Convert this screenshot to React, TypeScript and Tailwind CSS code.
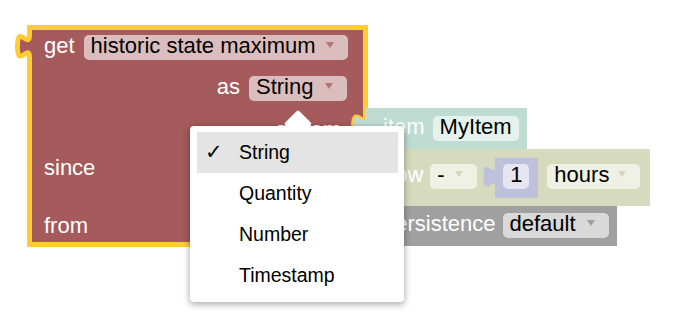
import React from 'react';

type DropdownProps = {
  label: string;
  className: string;
  arrowClass: string;
};

// Blockly dropdown field: text on a pale pill, small triangle at the right
const Dropdown: React.FC<DropdownProps> = ({ label, className, arrowClass }) => (
  <div className={`h-[25px] rounded-[5px] flex items-start pl-[7px] pr-[14px] leading-[21px] text-black ${className}`}>
    <span>{label}</span>
    <span className={`ml-auto mt-[7px] w-0 h-0 border-x-[4px] border-x-transparent border-t-[6px] ${arrowClass}`} />
  </div>
);

const menuItems = ['String', 'Quantity', 'Number', 'Timestamp'];

export default function App() {
  return (
    <div className="relative w-[673px] h-[324px] bg-white overflow-hidden font-['Liberation_Sans',Arial,sans-serif] text-[22px]">
      {/* selected block */}
      <div className="absolute left-[27px] top-[25px] w-[341px] h-[222px] border-[5px] border-[#ffcc33] bg-[#a55b5b] text-white flex flex-col">
        <div className="h-[38px] pt-[5px] pl-[12px] flex items-start gap-[9px]">
          <span className="leading-[21px]">get</span>
          <Dropdown label="historic state maximum" className="w-[264px] bg-[#dbbdbd]" arrowClass="border-t-[#b57474]" />
        </div>
        <div className="h-[40px] pt-[8px] pr-[16px] flex items-start justify-end gap-[9px]">
          <span className="leading-[21px]">as</span>
          <Dropdown label="String" className="w-[98px] bg-[#dbbdbd]" arrowClass="border-t-[#b57474]" />
        </div>
        <div className="h-[41px] pt-[11px] pr-[22px] flex items-start justify-end">
          <span className="leading-[21px]">of item</span>
        </div>
        <div className="h-[57px] pt-[8px] pl-[12px] leading-[21px]">since</div>
        <div className="flex-1 pt-[9px] pl-[12px] leading-[21px]">from</div>
      </div>

      {/* output tab on the left */}
      <svg className="absolute left-[8px] top-[28px]" width="30" height="34" viewBox="8 28 30 34">
        <path d="M34,57.5 H29.5 c0,-15 -12,12 -12,-11.25 s12,3.75 12,-11.25 H34 Z" fill="#a55b5b" />
        <path d="M29.5,61 V57.5 c0,-15 -12,12 -12,-11.25 s12,3.75 12,-11.25 V31" fill="none" stroke="#ffcc33" strokeWidth="5" />
      </svg>

      {/* input notch where the item block plugs in */}
      <svg className="absolute left-[345px] top-[100px]" width="30" height="45" viewBox="345 100 30 45">
        <path d="M365.5,100 V115.5 c0,15 -12,-12 -12,11.25 s12,-3.75 12,11.25 V145" fill="none" stroke="#ffcc33" strokeWidth="5" />
        <path d="M366,115.5 H365.5 c0,15 -12,-12 -12,11.25 s12,-3.75 12,11.25 H366 Z" fill="#bfdcd3" />
      </svg>

      {/* item block */}
      <div className="absolute left-[365px] top-[108px] w-[162px] h-[41px] bg-[#bfdcd3] text-white flex items-start pt-[8px] pl-[18px] gap-[8px]">
        <span className="leading-[21px]">item</span>
        <div className="h-[25px] rounded-[5px] bg-[#e5f1ed] px-[7px] leading-[21px] text-black">MyItem</div>
      </div>

      {/* now - 1 hours block */}
      <div className="absolute left-[365px] top-[149px] w-[285px] h-[57px] bg-[#d6dbbf] text-white flex items-start pt-[15px] pl-[18px]">
        <span className="leading-[21px]">now</span>
        <Dropdown label="-" className="ml-[7px] w-[47px] bg-[#eff1e5]" arrowClass="border-t-[#d3d8ba]" />
        <div className="relative ml-[18px] -mt-[6px] w-[43px] h-[40px] bg-[#bdc1dc] pt-[6px] pl-[8px]">
          <svg className="absolute left-[-13px] top-0" width="14" height="40" viewBox="482 158 14 40">
            <path d="M496,188 H495.5 c0,-15 -12,12 -12,-11.25 s12,3.75 12,-11.25 H496 Z" fill="#bdc1dc" />
          </svg>
          <div className="w-[26px] h-[25px] rounded-[5px] bg-[#e5e6f1] text-black text-center leading-[21px]">1</div>
        </div>
        <Dropdown label="hours" className="ml-[9px] w-[93px] bg-[#eff1e5]" arrowClass="border-t-[#d3d8ba]" />
      </div>

      {/* persistence block */}
      <div className="absolute left-[365px] top-[206px] w-[252px] h-[40px] bg-[#a0a0a0] text-white flex items-start pt-[7px] pl-[18px]">
        <span className="leading-[21px]">persistence</span>
        <Dropdown label="default" className="ml-[7px] w-[106px] bg-[#d9d9d9]" arrowClass="border-t-[#a0a0a0]" />
      </div>

      {/* open dropdown menu */}
      <div className="absolute left-[190px] top-[126px] w-[214px] h-[176px] bg-white rounded-[4px] shadow-[0_2px_6px_1px_rgba(0,0,0,0.3)] pt-[6px] pl-[7px] pr-[6px] text-[19.5px] text-black">
        <div className="absolute left-[98px] top-[-12px] w-[20px] h-[20px] bg-white rotate-45 rounded-[2px]" />
        {menuItems.map((item, i) => (
          <div
            key={item}
            className={`relative h-[41px] leading-[41px] pl-[42px] ${i === 0 ? 'bg-[#e4e4e4]' : ''}`}
          >
            {i === 0 && (
              <span className="absolute left-[8px] top-0 font-['DejaVu_Sans',sans-serif] text-[21px]">✓</span>
            )}
            {item}
          </div>
        ))}
      </div>
    </div>
  );
}
